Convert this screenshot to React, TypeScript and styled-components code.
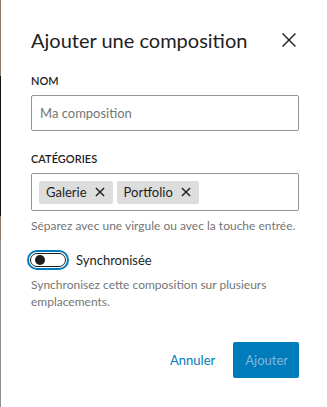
import React from 'react';
import styled, { createGlobalStyle } from 'styled-components';

const GlobalStyle = createGlobalStyle`
  html, body {
    margin: 0;
    padding: 0;
    height: 100%;
  }
  body {
    font-family: Lato, 'Noto Sans', sans-serif;
    color: #1e1e1e;
    background:
      linear-gradient(
        to bottom,
        #8c7c68 0,
        #8c7c68 76px,
        #111 76px,
        #111 216px,
        #8c7c68 216px,
        #8c7c68 240px,
        #8e8e8e 240px
      ) left top / 1px 100% no-repeat,
      #fff;
  }
`;

const Modal = styled.div`
  box-sizing: border-box;
  width: 327px;
  height: 407px;
  padding: 25px 28px 0 31px;
  display: flex;
  flex-direction: column;
`;

const Header = styled.div`
  display: flex;
  align-items: center;
  justify-content: space-between;
  height: 30px;
  margin-bottom: 18px;
`;

const Title = styled.h1`
  margin: 0;
  font-size: 20px;
  font-weight: 400;
  color: #1e1e1e;
`;

const CloseButton = styled.button`
  border: 0;
  background: none;
  padding: 0;
  width: 24px;
  height: 24px;
  display: flex;
  align-items: center;
  justify-content: center;
  color: #1e1e1e;
  margin-right: -2px;
`;

const Field = styled.div<{ $gap?: number }>`
  display: flex;
  flex-direction: column;
  margin-bottom: ${({ $gap }) => $gap ?? 0}px;
`;

const Label = styled.label`
  font-size: 11px;
  font-weight: 600;
  text-transform: uppercase;
  line-height: 16px;
  margin-bottom: 6px;
  color: #1e1e1e;
`;

const TextInput = styled.input`
  box-sizing: border-box;
  width: 268px;
  height: 36px;
  border: 1px solid #949494;
  border-radius: 2px;
  padding: 0 8px;
  font-family: inherit;
  font-size: 13px;
  color: #1e1e1e;

  &::placeholder {
    color: #757575;
  }
`;

const TokenBox = styled.div`
  box-sizing: border-box;
  width: 268px;
  height: 38px;
  border: 1px solid #949494;
  border-radius: 2px;
  padding: 0 7px;
  display: flex;
  align-items: center;
  gap: 4px;
`;

const Token = styled.span`
  display: inline-flex;
  align-items: center;
  height: 23px;
  background: #ddd;
  border-radius: 2px;
  padding: 0 6px 0 7px;
  gap: 6px;
  font-size: 13px;
  color: #1e1e1e;
`;

const Help = styled.p`
  margin: 6px 0 0;
  font-size: 12px;
  line-height: 17px;
  color: #757575;
`;

const ToggleRow = styled.div`
  display: flex;
  align-items: center;
  gap: 7px;
  margin-top: 16px;
  margin-left: -4px;
`;

const Toggle = styled.span`
  box-sizing: border-box;
  position: relative;
  width: 42px;
  height: 20px;
  border-radius: 10px;
  border: 2px solid #007cba;
  padding: 1px;
  display: flex;
  align-items: center;

  &::before {
    content: '';
    box-sizing: border-box;
    width: 100%;
    height: 100%;
    border: 1.5px solid #1e1e1e;
    border-radius: 8px;
    background: #fff;
  }

  &::after {
    content: '';
    position: absolute;
    left: 6px;
    top: 50%;
    transform: translateY(-50%);
    width: 10px;
    height: 10px;
    border-radius: 50%;
    background: #1e1e1e;
  }
`;

const ToggleLabel = styled.span`
  font-size: 13px;
  color: #1e1e1e;
`;

const Footer = styled.div`
  display: flex;
  justify-content: flex-end;
  align-items: center;
  gap: 7px;
  margin-top: auto;
  margin-bottom: 29px;
`;

const Button = styled.button<{ $primary?: boolean }>`
  height: 36px;
  border: 0;
  border-radius: 2px;
  padding: 0 11px 0 12px;
  font-family: inherit;
  font-size: 13px;
  background: ${({ $primary }) => ($primary ? '#007cba' : 'transparent')};
  color: ${({ $primary }) => ($primary ? '#80b7db' : '#007cba')};
`;

const XIcon = ({ size, stroke }: { size: number; stroke: number }) => (
  <svg width={size} height={size} viewBox="0 0 24 24" fill="none">
    <path d="M5 5l14 14M19 5L5 19" stroke="currentColor" strokeWidth={stroke} />
  </svg>
);

export default function App() {
  return (
    <>
      <GlobalStyle />
      <Modal>
        <Header>
          <Title>Ajouter une composition</Title>
          <CloseButton aria-label="Fermer">
            <XIcon size={22} stroke={1.5} />
          </CloseButton>
        </Header>

        <Field $gap={20}>
          <Label>Nom</Label>
          <TextInput placeholder="Ma composition" />
        </Field>

        <Field>
          <Label>Catégories</Label>
          <TokenBox>
            <Token>
              Galerie <XIcon size={14} stroke={2.4} />
            </Token>
            <Token>
              Portfolio <XIcon size={14} stroke={2.4} />
            </Token>
          </TokenBox>
          <Help>Séparez avec une virgule ou avec la touche entrée.</Help>
        </Field>

        <ToggleRow>
          <Toggle />
          <ToggleLabel>Synchronisée</ToggleLabel>
        </ToggleRow>
        <Help>Synchronisez cette composition sur plusieurs emplacements.</Help>

        <Footer>
          <Button>Annuler</Button>
          <Button $primary>Ajouter</Button>
        </Footer>
      </Modal>
    </>
  );
}
